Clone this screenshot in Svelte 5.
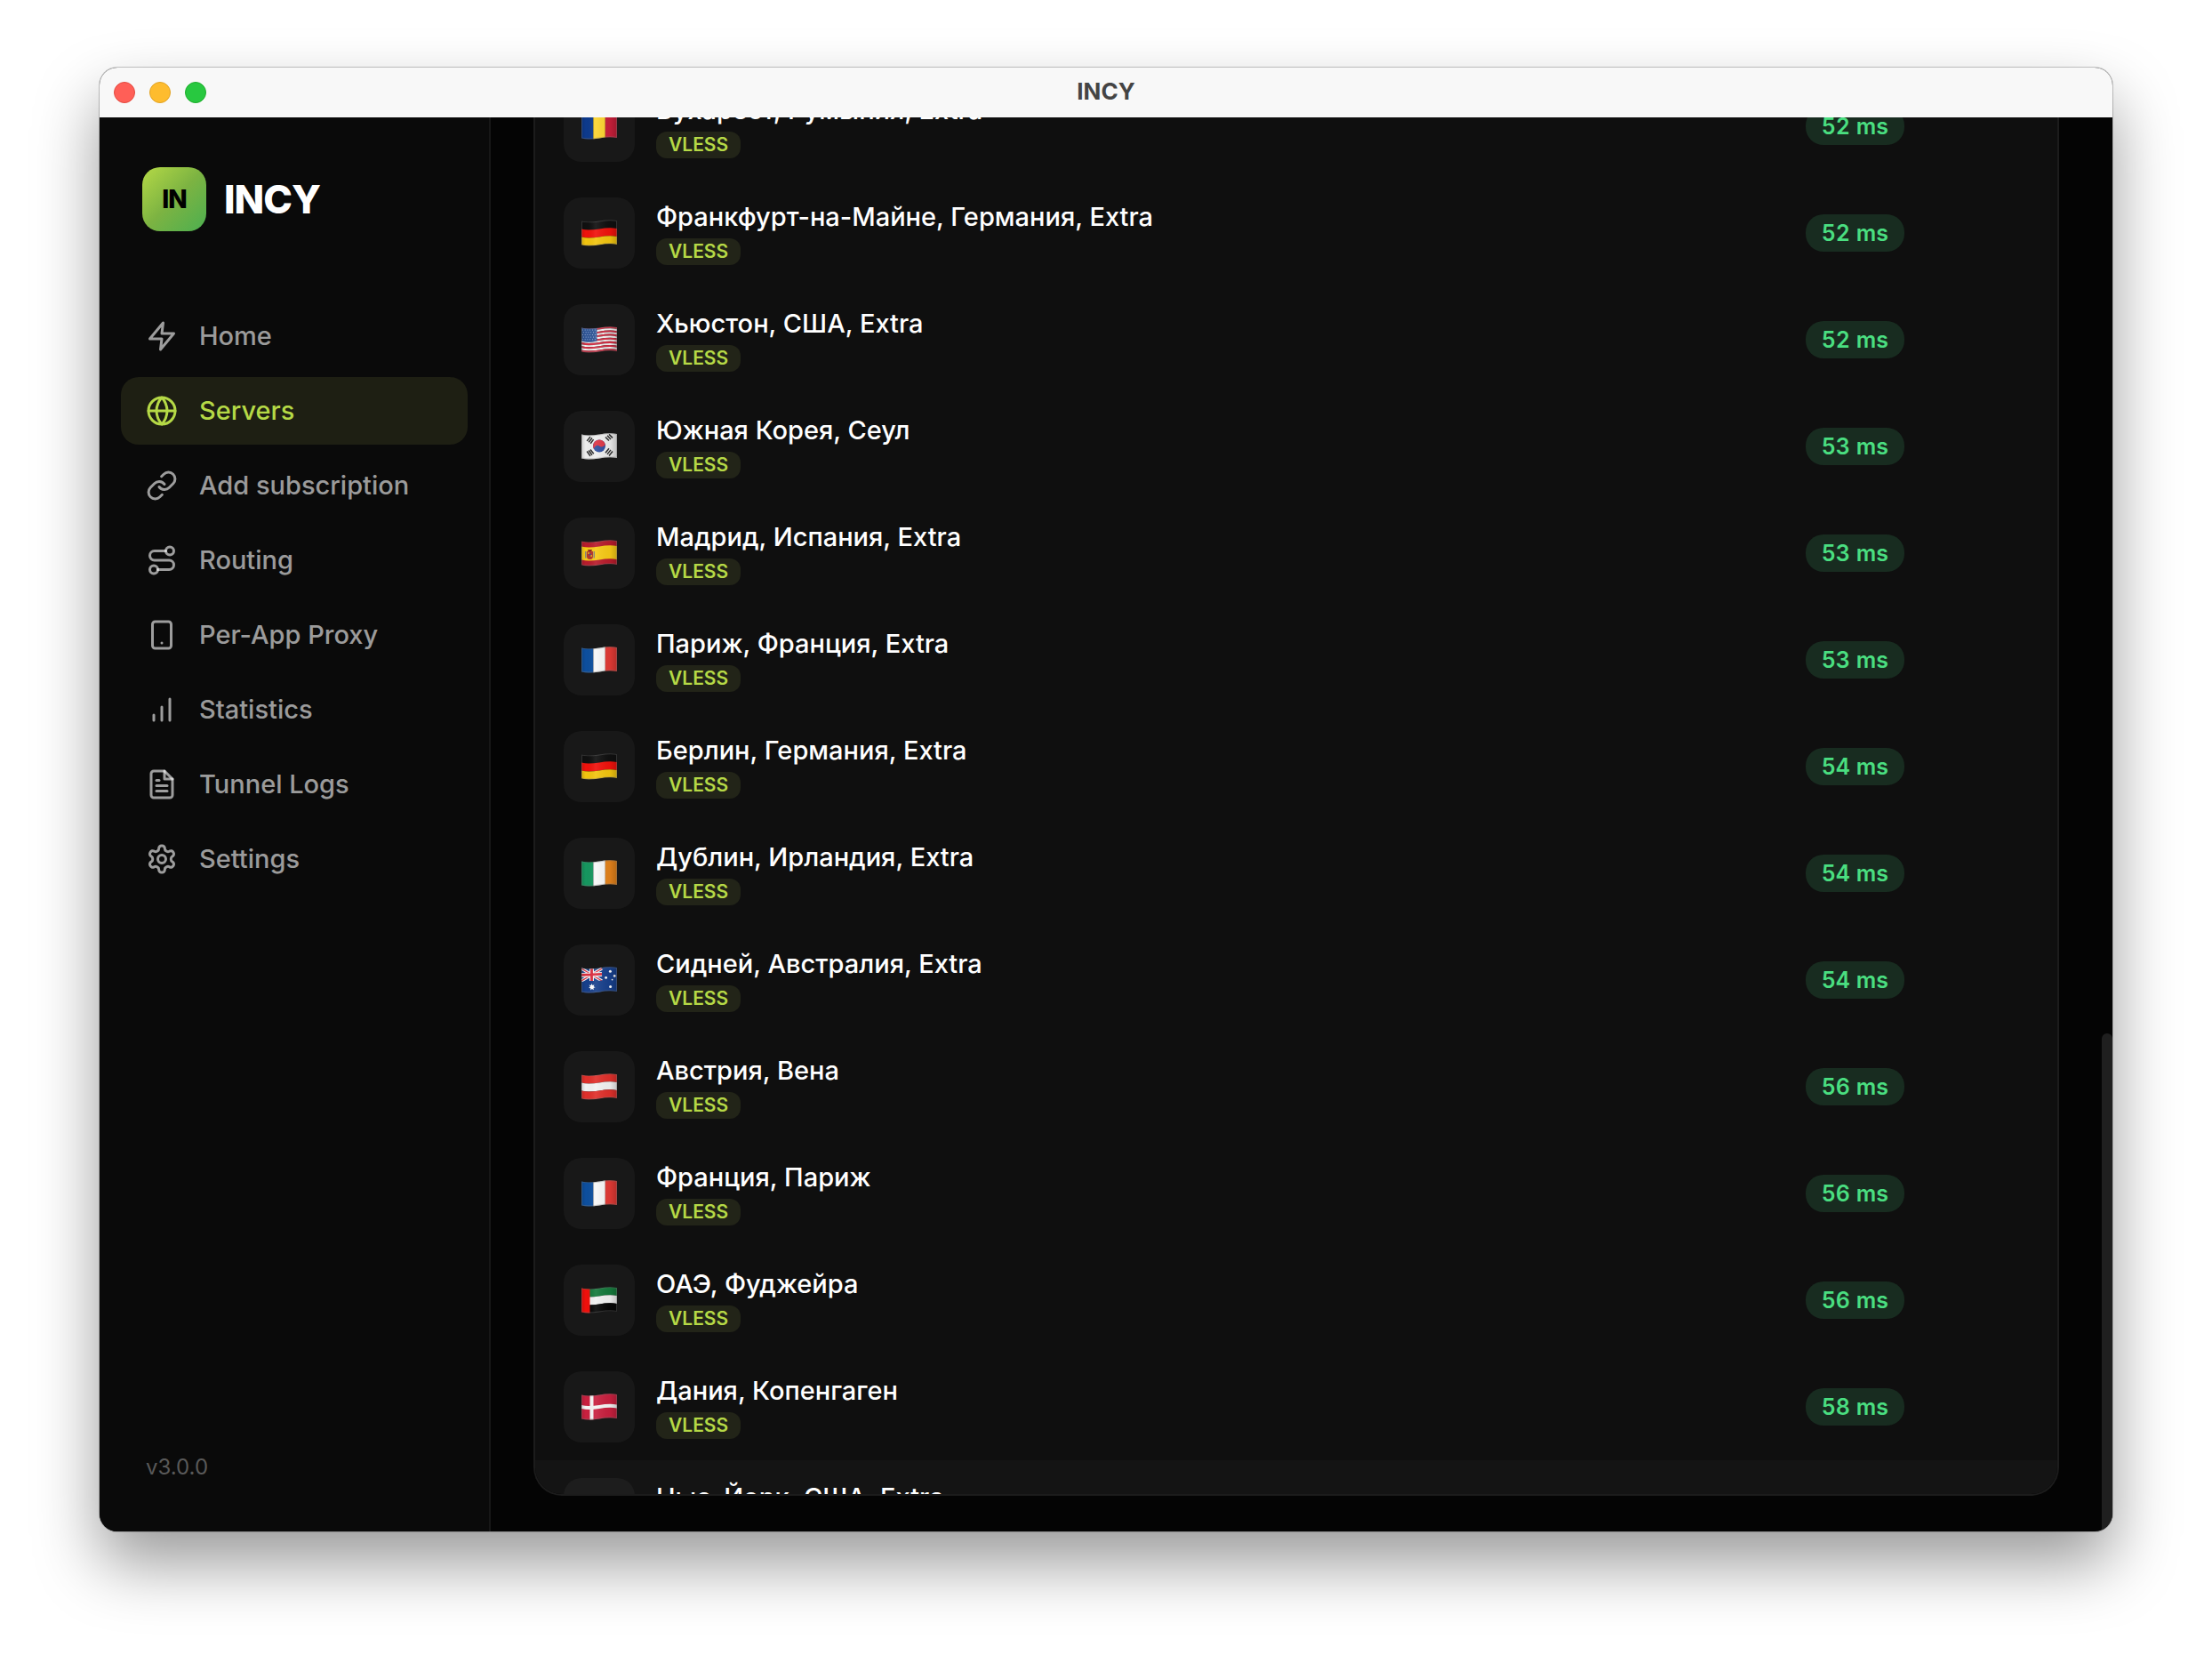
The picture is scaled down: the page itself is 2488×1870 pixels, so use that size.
<script>
    import { onMount } from "svelte";

    let list;
    let active = "Servers";

    const nav = [
        {
            label: "Home",
            paths: ["M13 2 3 14h9l-1 8 10-12h-9z"],
        },
        {
            label: "Servers",
            paths: [
                "M22 12a10 10 0 1 1-20 0 10 10 0 1 1 20 0z",
                "M2 12h20",
                "M12 2a15.3 15.3 0 0 1 4 10 15.3 15.3 0 0 1-4 10 15.3 15.3 0 0 1-4-10 15.3 15.3 0 0 1 4-10z",
            ],
        },
        {
            label: "Add subscription",
            paths: [
                "M10 13a5 5 0 0 0 7.54.54l3-3a5 5 0 0 0-7.07-7.07l-1.72 1.71",
                "M14 11a5 5 0 0 0-7.54-.54l-3 3a5 5 0 0 0 7.07 7.07l1.71-1.71",
            ],
        },
        {
            label: "Routing",
            paths: [
                "M9 19a3 3 0 1 1-6 0 3 3 0 1 1 6 0z",
                "M9 19h8.5a3.5 3.5 0 0 0 0-7h-11a3.5 3.5 0 0 1 0-7H15",
                "M21 5a3 3 0 1 1-6 0 3 3 0 1 1 6 0z",
            ],
        },
        {
            label: "Per-App Proxy",
            paths: [
                "M7 2h10a2 2 0 0 1 2 2v16a2 2 0 0 1-2 2H7a2 2 0 0 1-2-2V4a2 2 0 0 1 2-2z",
                "M12 18h.01",
            ],
        },
        {
            label: "Statistics",
            paths: ["M18 20V4", "M12 20V10", "M6 20v-4"],
        },
        {
            label: "Tunnel Logs",
            paths: [
                "M14 2H6a2 2 0 0 0-2 2v16a2 2 0 0 0 2 2h12a2 2 0 0 0 2-2V8z",
                "M14 2v6h6",
                "M16 13H8",
                "M16 17H8",
                "M10 9H8",
            ],
        },
        {
            label: "Settings",
            paths: [
                "M12.22 2h-.44a2 2 0 0 0-2 2v.18a2 2 0 0 1-1 1.73l-.43.25a2 2 0 0 1-2 0l-.15-.08a2 2 0 0 0-2.73.73l-.22.38a2 2 0 0 0 .73 2.73l.15.1a2 2 0 0 1 1 1.72v.51a2 2 0 0 1-1 1.74l-.15.09a2 2 0 0 0-.73 2.73l.22.38a2 2 0 0 0 2.73.73l.15-.08a2 2 0 0 1 2 0l.43.25a2 2 0 0 1 1 1.73V20a2 2 0 0 0 2 2h.44a2 2 0 0 0 2-2v-.18a2 2 0 0 1 1-1.73l.43-.25a2 2 0 0 1 2 0l.15.08a2 2 0 0 0 2.73-.73l.22-.39a2 2 0 0 0-.73-2.73l-.15-.08a2 2 0 0 1-1-1.74v-.5a2 2 0 0 1 1-1.74l.15-.09a2 2 0 0 0 .73-2.73l-.22-.38a2 2 0 0 0-2.73-.73l-.15.08a2 2 0 0 1-2 0l-.43-.25a2 2 0 0 1-1-1.73V4a2 2 0 0 0-2-2z",
                "M15 12a3 3 0 1 1-6 0 3 3 0 1 1 6 0z",
            ],
        },
    ];

    const servers = [
        { flag: "ro", name: "Бухарест, Румыния, Extra", ping: 52 },
        { flag: "de", name: "Франкфурт-на-Майне, Германия, Extra", ping: 52 },
        { flag: "us", name: "Хьюстон, США, Extra", ping: 52 },
        { flag: "kr", name: "Южная Корея, Сеул", ping: 53 },
        { flag: "es", name: "Мадрид, Испания, Extra", ping: 53 },
        { flag: "fr", name: "Париж, Франция, Extra", ping: 53 },
        { flag: "de", name: "Берлин, Германия, Extra", ping: 54 },
        { flag: "ie", name: "Дублин, Ирландия, Extra", ping: 54 },
        { flag: "au", name: "Сидней, Австралия, Extra", ping: 54 },
        { flag: "at", name: "Австрия, Вена", ping: 56 },
        { flag: "fr", name: "Франция, Париж", ping: 56 },
        { flag: "ae", name: "ОАЭ, Фуджейра", ping: 56 },
        { flag: "dk", name: "Дания, Копенгаген", ping: 58 },
        { flag: "us", name: "Нью-Йорк, США, Extra", ping: 58, hovered: true },
    ];

    // flags made of equal stripes; the rest have their own markup below
    const stripes = {
        de: ["#101010", "#f0120c", "#f2c50f"],
        at: ["#e0302b", "#f2f2f2", "#e0302b"],
        ae: ["#157a3c", "#f2f2f2", "#060606"],
        us: Array.from({ length: 13 }, (_, i) => (i % 2 ? "#f4f0f0" : "#d42e44")),
    };
    const columns = {
        ro: ["#0d3a8c", "#fbd42f", "#c81f3a"],
        fr: ["#0d4f9e", "#f7f7f7", "#e23a35"],
        ie: ["#16965f", "#f7f7f7", "#e3821b"],
    };

    // a waving horizontal band of the flag, between two heights
    function band(from, to) {
        return `M0 ${from + 1.5}C13 ${from + 5} 26 ${from - 2} 40 ${from + 1}V${to + 1}C26 ${to - 2} 13 ${to + 5} 0 ${to + 1.5}z`;
    }

    onMount(() => {
        list.scrollTop = 50;
    });
</script>

<div class="desktop">
    <div class="window">
        <header class="titlebar">
            <div class="lights">
                <button class="light close" aria-label="Close"></button>
                <button class="light minimize" aria-label="Minimize"></button>
                <button class="light zoom" aria-label="Zoom"></button>
            </div>
            <div class="title">INCY</div>
        </header>

        <div class="body">
            <aside class="sidebar">
                <div class="brand">
                    <div class="logo">IN</div>
                    <div class="brand-name">INCY</div>
                </div>
                <nav>
                    {#each nav as item}
                        <button
                            class="nav-item"
                            class:active={active === item.label}
                            on:click={() => (active = item.label)}
                        >
                            <svg viewBox="0 0 24 24" aria-hidden="true">
                                {#each item.paths as d}
                                    <path {d} />
                                {/each}
                            </svg>
                            <span>{item.label}</span>
                        </button>
                    {/each}
                </nav>
                <div class="version">v3.0.0</div>
            </aside>

            <main>
                <ul class="card" bind:this={list}>
                    {#each servers as server, i}
                        <li class="row" class:hovered={server.hovered}>
                            <div class="tile">
                                <svg viewBox="0 0 40 30" aria-hidden="true">
                                    <defs>
                                        <clipPath id="wave-{i}">
                                            <path d={band(0, 27)} />
                                        </clipPath>
                                        <linearGradient id="fold-{i}">
                                            <stop offset="0" stop-color="#000" stop-opacity="0.14" />
                                            <stop offset="0.12" stop-color="#000" stop-opacity="0" />
                                            <stop offset="0.4" stop-color="#fff" stop-opacity="0.08" />
                                            <stop offset="0.8" stop-color="#000" stop-opacity="0.04" />
                                            <stop offset="1" stop-color="#000" stop-opacity="0.2" />
                                        </linearGradient>
                                    </defs>
                                    <g clip-path="url(#wave-{i})">
                                        {#if stripes[server.flag]}
                                            {@const colors = stripes[server.flag]}
                                            {#each colors as fill, n}
                                                <path
                                                    d={band((n * 27) / colors.length, ((n + 1) * 27) / colors.length)}
                                                    {fill}
                                                />
                                            {/each}
                                        {:else if columns[server.flag]}
                                            {#each columns[server.flag] as fill, n}
                                                <rect x={n * 13.4} width="13.4" height="30" {fill} />
                                            {/each}
                                        {/if}

                                        {#if server.flag === "us"}
                                            <path d="M0 0h17.5v16.5C11 18.5 5 18 0 16.5z" fill="#2f5596" />
                                            <g fill="#b9c9e4">
                                                {#each [4, 6.7, 9.4, 12.1, 14.8] as y, n}
                                                    {#each [1.6, 4.4, 7.2, 10, 12.8, 15.6] as x}
                                                        <circle cx={x + (n % 2 ? 0.7 : -0.3)} cy={y} r="0.5" />
                                                    {/each}
                                                {/each}
                                            </g>
                                        {:else if server.flag === "ae"}
                                            <rect width="9.5" height="30" fill="#f0100c" />
                                        {:else if server.flag === "es"}
                                            <path d={band(0, 27)} fill="#b81c2c" />
                                            <path d={band(6, 21)} fill="#f7cb17" />
                                            <path d="M6 13h7v5.5a3.5 3.5 0 0 1-7 0z" fill="#b5352c" />
                                            <path d="M4 13h1.5v7.5H4zM13.5 13H15v7.5h-1.5z" fill="#8c8478" />
                                            <path d="M7 11h5l-.7 2H7.7z" fill="#8f2c1c" />
                                            <circle cx="8" cy="15" r="1" fill="#e8b51b" />
                                            <circle cx="11.2" cy="18" r="1" fill="#e8b51b" />
                                            <circle cx="9.6" cy="16.5" r="1" fill="#3b4aa0" />
                                        {:else if server.flag === "dk"}
                                            <rect width="40" height="30" fill="#c9203f" />
                                            <path d={band(11.5, 15.5)} fill="#f5f5f5" />
                                            <rect x="9.5" width="4" height="30" fill="#f5f5f5" />
                                        {:else if server.flag === "kr"}
                                            <rect width="40" height="30" fill="#eeeeee" />
                                            <circle cx="20" cy="14.5" r="7" fill="#2f4f9f" />
                                            <path
                                                d="M13.8 17.7A7 7 0 1 1 26.8 12.7C25.4 15.9 21.6 16.1 20 14.5S15.2 13.9 13.8 17.7z"
                                                fill="#dc3545"
                                            />
                                            <g stroke="#2c2c2c" stroke-width="1.5">
                                                <path d="M6.2 8.9 10 4.1M8.2 10.3 12 5.5M10.2 11.7 13.6 7.1" />
                                                <path d="M27 4.4 31 8.6M29 2.8 33 7M31 1.4 35 5.4" />
                                                <path d="M6.2 20.5 10 25.9M8.2 19.5 12 24.7M10 18.5 13.8 23.3" />
                                                <path d="M27 22.3 31 17.3M29 23.9 33 18.9M31 25.5 35 20.5" />
                                            </g>
                                        {:else if server.flag === "au"}
                                            <rect width="40" height="30" fill="#18408c" />
                                            <g fill="none">
                                                <path d="M0 2 23 16M0 16 23 2" stroke="#f2f2f2" stroke-width="3.4" />
                                                <path d="M0 2 23 16M0 16 23 2" stroke="#dc2f40" stroke-width="1.2" />
                                                <path d="M11.5 0v16M0 9.4 23 8.4" stroke="#f2f2f2" stroke-width="5" />
                                                <path d="M11.5 0v16M0 9.4 23 8.4" stroke="#dc2f40" stroke-width="2.8" />
                                            </g>
                                            <path d="M0 17 24 15.5v14H0z" fill="#18408c" />
                                            <g fill="#fff">
                                                <path d="m11.5 19.1 1 2 2-.9-.8 2.1 1.9 1-2.1.7.3 2.2-1.9-1.2-1.6 1.5v-2.2l-2.1-.4 1.7-1.4-1.2-1.9 2.1.4z" />
                                                <circle cx="32.4" cy="5.2" r="1.5" />
                                                <circle cx="27.6" cy="12.4" r="1.4" />
                                                <circle cx="37.2" cy="10.4" r="1.4" />
                                                <circle cx="34.6" cy="14.6" r="0.9" />
                                                <circle cx="32.6" cy="22.4" r="1.5" />
                                            </g>
                                        {/if}
                                        <rect width="40" height="30" fill="url(#fold-{i})" />
                                        <path d={band(0, 27)} class="edge" />
                                    </g>
                                </svg>
                            </div>
                            <div class="info">
                                <div class="name">{server.name}</div>
                                <span class="protocol">VLESS</span>
                            </div>
                            <div class="ping">{server.ping} ms</div>
                        </li>
                    {/each}
                </ul>
                <div class="scrollbar">
                    <div class="thumb"></div>
                </div>
            </main>
        </div>
    </div>
</div>

<style>
    :global(body) {
        background: #fff;
        font-family: Inter, "Noto Sans", sans-serif;
    }

    .desktop {
        box-sizing: border-box;
        display: flex;
        height: 100vh;
        padding: 76px 112px 148px;
    }

    .window {
        flex: 1;
        min-width: 0;
        display: flex;
        flex-direction: column;
        overflow: hidden;
        border-radius: 20px;
        background: #040404;
        box-shadow:
            0 0 0 1px rgba(0, 0, 0, 0.22),
            0 36px 72px rgba(0, 0, 0, 0.4);
    }

    /* Title bar */
    .titlebar {
        display: grid;
        grid-template-columns: 1fr auto 1fr;
        align-items: center;
        height: 56px;
        padding: 0 16px;
        background: #f8f8f8;
    }

    .lights {
        display: flex;
        gap: 16px;
    }

    .light {
        box-sizing: border-box;
        width: 24px;
        height: 24px;
        padding: 0;
        border: 1px solid;
        border-radius: 50%;
    }

    .close {
        background: #ff5f57;
        border-color: #e24b41;
    }

    .minimize {
        background: #febc2e;
        border-color: #e1a325;
    }

    .zoom {
        background: #28c840;
        border-color: #1dad2b;
    }

    .title {
        padding-bottom: 2px;
        color: #444;
        font-size: 26px;
        font-weight: 700;
        line-height: 32px;
    }

    .body {
        flex: 1;
        min-height: 0;
        display: flex;
    }

    /* Sidebar */
    .sidebar {
        box-sizing: border-box;
        flex: none;
        width: 440px;
        display: flex;
        flex-direction: column;
        padding: 56px 24px;
        border-right: 2px solid #171717;
        background: #0a0a0a;
    }

    .brand {
        display: flex;
        align-items: center;
        gap: 20px;
        padding: 0 24px;
        margin-bottom: 80px;
    }

    .logo {
        display: flex;
        align-items: center;
        justify-content: center;
        width: 72px;
        height: 72px;
        border-radius: 20px;
        background: linear-gradient(135deg, #b5d946 0%, #7cb342 50%, #4caf50 100%);
        color: #000;
        font-size: 28px;
        font-weight: 800;
        letter-spacing: -1px;
    }

    .brand-name {
        color: #fff;
        font-size: 44px;
        font-weight: 800;
        letter-spacing: -1px;
    }

    nav {
        display: flex;
        flex-direction: column;
        gap: 8px;
    }

    .nav-item {
        display: flex;
        align-items: center;
        gap: 24px;
        height: 76px;
        padding: 0 28px;
        border: 0;
        border-radius: 20px;
        background: none;
        color: rgba(255, 255, 255, 0.6);
        font: 500 29px/36px Inter, "Noto Sans", sans-serif;
        text-align: left;
        cursor: pointer;
    }

    .nav-item.active {
        background: #1e1f13;
        color: #b5d946;
    }

    .nav-item svg {
        flex: none;
        width: 36px;
        height: 36px;
        fill: none;
        stroke: currentColor;
        stroke-width: 2;
        stroke-linecap: round;
        stroke-linejoin: round;
    }

    .version {
        margin-top: auto;
        padding: 0 28px;
        color: #595959;
        font-size: 24px;
        line-height: 32px;
    }

    /* Server list */
    main {
        flex: 1;
        min-width: 0;
        display: flex;
        padding-left: 48px;
    }

    .card {
        flex: 1;
        min-width: 0;
        margin: 0 48px 40px 0;
        padding: 0;
        overflow-y: auto;
        scrollbar-width: none;
        list-style: none;
        border: 2px solid #1c1c1c;
        border-top: 0;
        border-radius: 0 0 32px 32px;
        background: #0f0f0f;
    }

    .row {
        display: grid;
        grid-template-columns: 80px 1fr auto 116px;
        align-items: center;
        gap: 24px;
        padding: 20px 32px;
    }

    .row.hovered {
        background: #141414;
    }

    .tile {
        display: flex;
        align-items: center;
        justify-content: center;
        height: 80px;
        border-radius: 20px;
        background: rgba(255, 255, 255, 0.04);
    }

    .tile svg {
        width: 40px;
        height: 30px;
    }

    .edge {
        fill: none;
        stroke: #777;
        stroke-opacity: 0.35;
        stroke-width: 2;
    }

    .info {
        display: flex;
        flex-direction: column;
        align-items: flex-start;
        gap: 6px;
    }

    .name {
        color: #fff;
        font-size: 29px;
        font-weight: 500;
        line-height: 36px;
    }

    .protocol {
        padding: 2px 14px;
        border-radius: 12px;
        background: #222418;
        color: #b5d946;
        font-size: 21px;
        font-weight: 600;
        line-height: 26px;
    }

    .ping {
        padding: 6px 18px;
        border-radius: 20px;
        background: #182c20;
        color: #4ade80;
        font-size: 25px;
        font-weight: 600;
        font-variant-numeric: tabular-nums;
        line-height: 30px;
    }

    .scrollbar {
        flex: none;
        width: 12px;
        display: flex;
        flex-direction: column;
        justify-content: flex-end;
    }

    .thumb {
        height: 35.2%;
        border-radius: 6px 6px 0 0;
        background: #1f1f1f;
    }
</style>
